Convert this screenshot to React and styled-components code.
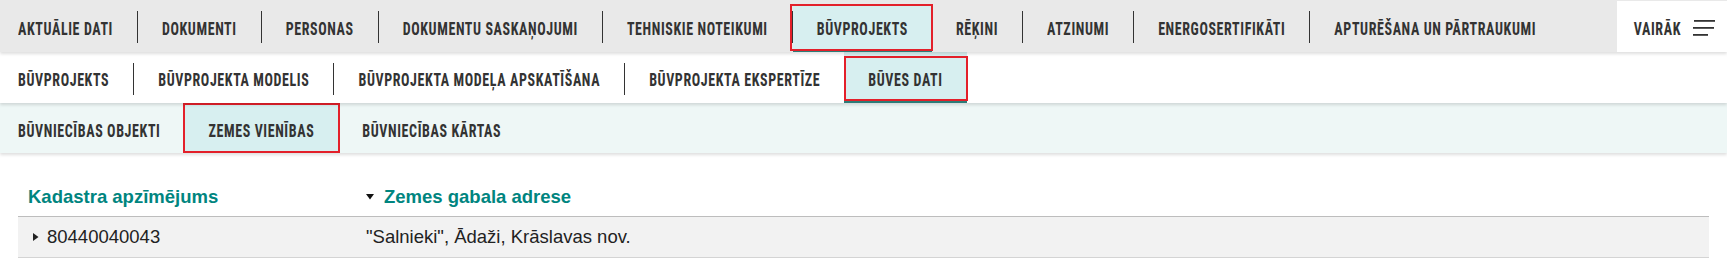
import React from 'react';
import styled, { createGlobalStyle } from 'styled-components';

const GlobalStyle = createGlobalStyle`
  * { box-sizing: border-box; }
  body {
    margin: 0;
    background: #fff;
    font-family: "Liberation Sans", Arial, sans-serif;
  }
`;

const Bar = styled.nav`
  position: relative;
  z-index: ${({ $level }) => $level};
  display: flex;
  align-items: stretch;
  height: ${({ $height }) => $height}px;
  background: ${({ $bg }) => $bg};
  box-shadow: 0 2px 3px rgba(0, 0, 0, 0.13);
`;

const Tab = styled.a`
  position: relative;
  display: flex;
  align-items: center;
  flex-shrink: 0;
  padding: 3px 24px 0;
  color: #333;
  text-decoration: none;
  cursor: pointer;
  background: ${({ $active, $clipTop }) =>
    $active
      ? `linear-gradient(to bottom, transparent ${$clipTop}px, #d7eff0 ${$clipTop}px)`
      : 'transparent'};
  box-shadow: ${({ $active, $bar }) => ($active && $bar ? 'inset 0 -3px 0 #2d7b77' : 'none')};

  &:first-child {
    padding-left: 18px;
  }
`;

// condensed caps, stretched a little to get the tall poster look
const Label = styled.span`
  display: inline-block;
  font-family: "Roboto Condensed", "Open Sans Condensed", "Liberation Sans", sans-serif;
  font-weight: 700;
  font-size: 14px;
  line-height: 1;
  letter-spacing: 0.6px;
  white-space: nowrap;
  transform: scaleY(1.3);
`;

const Highlight = styled.span`
  position: absolute;
  top: ${({ $top }) => $top}px;
  bottom: ${({ $bottom }) => $bottom}px;
  left: ${({ $left }) => $left}px;
  right: ${({ $right }) => $right}px;
  border: 2px solid #e3202a;
  pointer-events: none;
`;

const Divider = styled.span`
  flex-shrink: 0;
  align-self: center;
  width: 1px;
  height: 32px;
  margin-top: ${({ $shift }) => $shift}px;
  background: #333;
`;

const More = styled.button`
  display: flex;
  align-items: center;
  gap: 12px;
  margin: 1px 0 0 auto;
  padding: 3px 12px 0 17px;
  border: none;
  background: #fff;
  color: #333;
  cursor: pointer;
`;

const Table = styled.div`
  margin: 24px 18px 0;
`;

const Row = styled.div`
  display: grid;
  grid-template-columns: 338px 1fr;
  align-items: center;
  height: ${({ $head }) => ($head ? 40 : 41)}px;
  background: ${({ $head }) => ($head ? 'transparent' : '#f2f2f2')};
  border-bottom: 1px solid ${({ $head }) => ($head ? '#bdbdbd' : '#d4d4d4')};
`;

const HeadCell = styled.div`
  display: flex;
  align-items: center;
  gap: 10px;
  padding: 0 10px;
  font-size: 18.5px;
  font-weight: 700;
  color: #00857f;
`;

const Cell = styled.div`
  display: flex;
  align-items: center;
  gap: 8px;
  padding: 0 10px;
  font-size: 18.5px;
  color: #222;
`;

const Caret = styled.svg`
  flex-shrink: 0;
  margin-left: ${({ $indent }) => $indent || 0}px;
`;

const MenuIcon = () => (
  <svg width="22" height="16" viewBox="0 0 22 16">
    <rect x="1" y="0" width="21" height="1.8" fill="#333" />
    <rect x="0" y="7" width="21" height="1.8" fill="#333" />
    <rect x="0" y="14" width="15" height="1.8" fill="#333" />
  </svg>
);

const SortDown = () => (
  <Caret width="8" height="6" viewBox="0 0 8 6">
    <path d="M0 0 L8 0 L4 5.5 Z" fill="#111" />
  </Caret>
);

const Expand = () => (
  <Caret $indent={5} width="6" height="8" viewBox="0 0 6 8">
    <path d="M0 0 L5.5 4 L0 8 Z" fill="#222" />
  </Caret>
);

const rows = [
  {
    level: 3,
    height: 52,
    bg: '#e9e9e9',
    clipTop: 4,
    bar: true,
    shift: 2,
    box: { top: 4, bottom: 1, left: -3, right: -1 },
    tabs: [
      { label: 'AKTUĀLIE DATI' },
      { label: 'DOKUMENTI', divider: true },
      { label: 'PERSONAS', divider: true },
      { label: 'DOKUMENTU SASKAŅOJUMI', divider: true },
      { label: 'TEHNISKIE NOTEIKUMI', divider: true },
      { label: 'BŪVPROJEKTS', divider: true, active: true },
      { label: 'RĒĶINI' },
      { label: 'ATZINUMI', divider: true },
      { label: 'ENERGOSERTIFIKĀTI', divider: true },
      { label: 'APTURĒŠANA UN PĀRTRAUKUMI', divider: true },
    ],
    more: true,
  },
  {
    level: 2,
    height: 51,
    bg: '#fff',
    clipTop: 0,
    bar: true,
    shift: 3,
    box: { top: 4, bottom: 2, left: 0, right: -1 },
    tabs: [
      { label: 'BŪVPROJEKTS' },
      { label: 'BŪVPROJEKTA MODELIS', divider: true },
      { label: 'BŪVPROJEKTA MODEĻA APSKATĪŠANA', divider: true },
      { label: 'BŪVPROJEKTA EKSPERTĪZE', divider: true },
      { label: 'BŪVES DATI', active: true },
    ],
  },
  {
    level: 1,
    height: 50,
    bg: '#eef7f6',
    clipTop: 0,
    bar: false,
    shift: 2,
    box: { top: 0, bottom: 0, left: -1, right: -2 },
    tabs: [
      { label: 'BŪVNIECĪBAS OBJEKTI' },
      { label: 'ZEMES VIENĪBAS', active: true },
      { label: 'BŪVNIECĪBAS KĀRTAS' },
    ],
  },
];

const parcels = [
  { id: '80440040043', address: '"Salnieki", Ādaži, Krāslavas nov.' },
];

const App = () => {
  return (
    <>
      <GlobalStyle />
      {rows.map((row, r) => (
        <Bar key={r} $level={row.level} $height={row.height} $bg={row.bg}>
          {row.tabs.map((tab) => (
            <React.Fragment key={tab.label}>
              {tab.divider && <Divider $shift={row.shift} />}
              <Tab $active={tab.active} $clipTop={row.clipTop} $bar={row.bar}>
                <Label>{tab.label}</Label>
                {tab.active && (
                  <Highlight
                    $top={row.box.top}
                    $bottom={row.box.bottom}
                    $left={row.box.left}
                    $right={row.box.right}
                  />
                )}
              </Tab>
            </React.Fragment>
          ))}
          {row.more && (
            <More>
              <Label>VAIRĀK</Label>
              <MenuIcon />
            </More>
          )}
        </Bar>
      ))}

      <Table>
        <Row $head>
          <HeadCell>Kadastra apzīmējums</HeadCell>
          <HeadCell>
            <SortDown />
            Zemes gabala adrese
          </HeadCell>
        </Row>
        {parcels.map((p) => (
          <Row key={p.id}>
            <Cell>
              <Expand />
              {p.id}
            </Cell>
            <Cell>{p.address}</Cell>
          </Row>
        ))}
      </Table>
    </>
  );
};

export default App;
